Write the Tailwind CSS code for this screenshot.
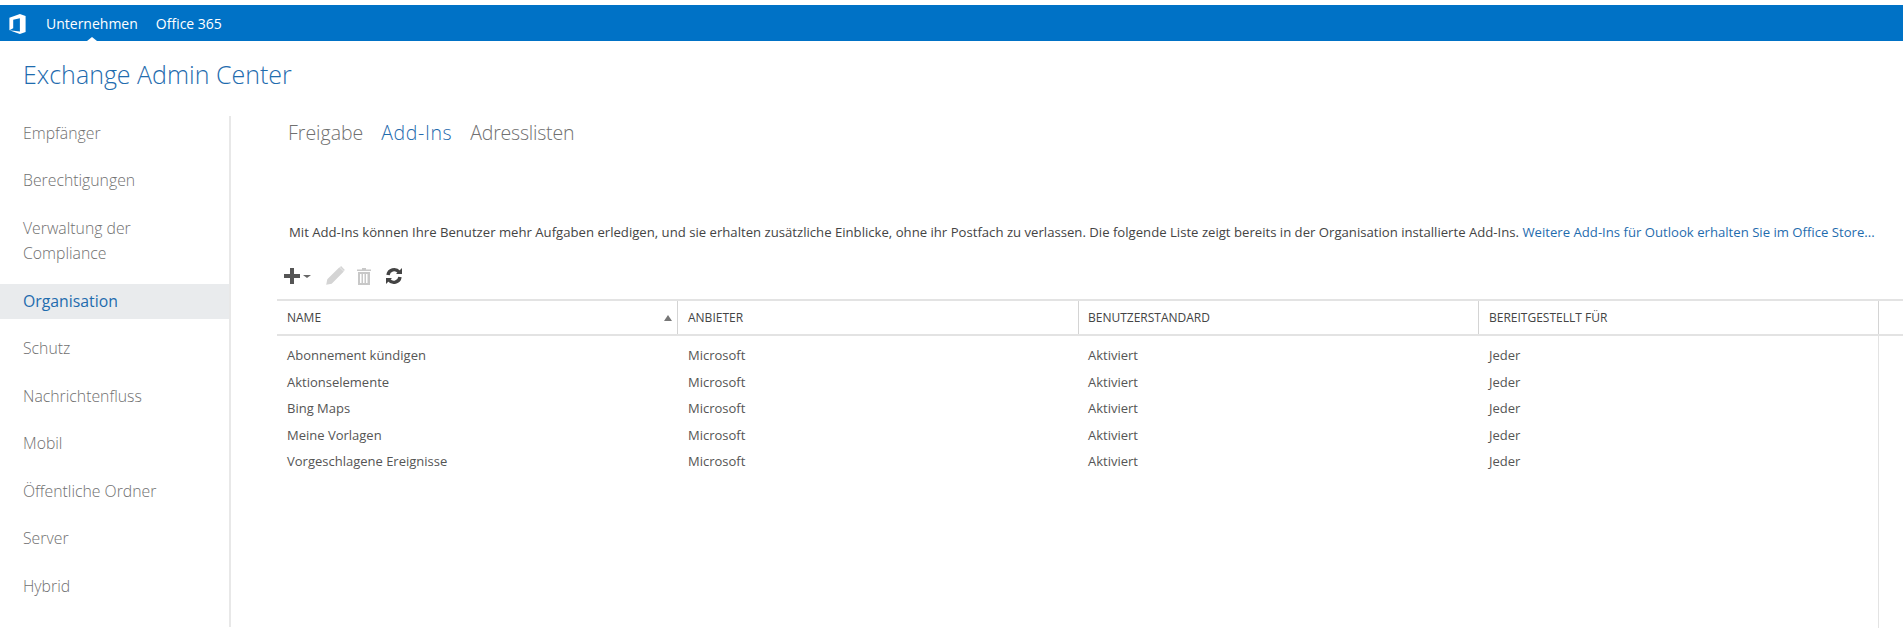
<!DOCTYPE html>
<html lang="de">
<head>
<meta charset="UTF-8">
<title>Exchange Admin Center</title>
<script src="https://cdn.jsdelivr.net/npm/@tailwindcss/browser@4"></script>
</head>
<body class="h-[628px] overflow-hidden bg-white font-['Open_Sans',sans-serif] text-[#333]">
  <div class="h-[5px]"></div>
  <header class="relative flex h-[36px] items-center bg-[#0072c6] text-[14px] text-white">
    <svg class="mt-[1px] ml-[8px] h-[20px] w-[19px]" viewBox="0 0 19 21" fill="#fff"><path d="M1 4 12 0l6 2v17l-6 2-11-4 11 1.500V4.500L5 6v9l-4 2z"/></svg>
    <span class="ml-[19px]">Unternehmen</span>
    <span class="ml-[18px]">Office 365</span>
    <span class="absolute top-[32px] left-[87px] h-0 w-0 border-x-[5px] border-b-[4px] border-x-transparent border-b-white"></span>
  </header>
  <h1 class="pt-[16px] pl-[23px] text-[25px] leading-[34px] font-light text-[#1f6cae]">Exchange Admin Center</h1>
  <div class="mt-[25px] flex h-[511px]">
    <nav class="flex w-[231px] flex-none flex-col gap-[12.450px] border-r-2 border-[#e8e8e8] text-[15.800px] font-light text-[#707070]">
      <a class="flex h-[35px] items-center pl-[23px]">Empfänger</a>
      <a class="flex h-[35px] items-center pl-[23px]">Berechtigungen</a>
      <a class="pt-[5px] pb-[5px] pl-[23px] leading-[25.500px]">Verwaltung der<br>Compliance</a>
      <a class="flex h-[35px] items-center bg-[#e9ebed] pl-[23px] font-normal text-[#1f6cae]">Organisation</a>
      <a class="flex h-[35px] items-center pl-[23px]">Schutz</a>
      <a class="flex h-[35px] items-center pl-[23px]">Nachrichtenfluss</a>
      <a class="flex h-[35px] items-center pl-[23px]">Mobil</a>
      <a class="flex h-[35px] items-center pl-[23px]">Öffentliche Ordner</a>
      <a class="flex h-[35px] items-center pl-[23px]">Server</a>
      <a class="flex h-[35px] items-center pl-[23px]">Hybrid</a>
    </nav>
    <main class="min-w-0 flex-1 pl-[46px]">
      <div class="flex pt-[3px] pl-[11px] text-[19.500px] leading-[28px] font-light text-[#707070]">
        <span>Freigabe</span>
        <span class="ml-[18px] tracking-[0.600px] text-[#1f6cae]">Add-Ins</span>
        <span class="ml-[18px] tracking-[-0.200px]">Adresslisten</span>
      </div>
      <p class="mt-[76px] pl-[12px] text-[13.150px] leading-[18px] whitespace-nowrap text-[#444]">Mit Add-Ins können Ihre Benutzer mehr Aufgaben erledigen, und sie erhalten zusätzliche Einblicke, ohne ihr Postfach zu verlassen. Die folgende Liste zeigt bereits in der Organisation installierte Add-Ins. <a class="text-[#1f6cae]">Weitere Add-Ins für Outlook erhalten Sie im Office Store...</a></p>
      <div class="mt-[23px] flex h-[24px] items-center pl-[6px]">
        <svg class="h-[18px] w-[18px]" viewBox="0 0 18 18" fill="#555"><path d="M7 1h4v6h6v4h-6v6H7v-6H1V7h6z"/></svg>
        <span class="ml-[2px] h-0 w-0 border-x-[4px] border-t-[3px] border-x-transparent border-t-[#666]"></span>
        <svg class="ml-[13px] h-[22px] w-[22px]" viewBox="0 0 20 20" fill="#d4d4d4"><path d="M14 2l4 4L7 17l-5 1 1-5zM15.500 1l3.500 3.500-1 1L14.500 2z"/></svg>
        <svg class="ml-[10px] h-[17px] w-[16px]" viewBox="0 0 16 17" fill="#c8c8c8"><path d="M6 0h4v1.500h5V3H1V1.500h5zM2 4h12v13H2zm2 2v9h1.500V6zm3 0v9h1.500V6zm3 0v9h1.500V6z" fill-rule="evenodd"/></svg>
        <svg class="ml-[13px] h-[18px] w-[18px]" viewBox="0 0 18 18" fill="none" stroke="#444" stroke-width="3.400"><path d="M3 8a6.200 6.200 0 0 1 11-3"/><path d="M15 10a6.200 6.200 0 0 1-11 3"/><path d="M17 1v6h-6z" fill="#444" stroke="none"/><path d="M1 17v-6h6z" fill="#444" stroke="none"/></svg>
      </div>
      <div class="mt-[11px] grid h-[37px] grid-cols-[401px_401px_400px_400px_1fr] border-y-2 border-[#e3e3e3] text-[12px] text-[#444]">
        <div class="relative flex items-center border-r border-[#d4d4d4] pl-[10px]">NAME<span class="absolute right-[5px] h-0 w-0 border-x-[4px] border-b-[6px] border-x-transparent border-b-[#777]"></span></div>
        <div class="flex items-center border-r border-[#d4d4d4] pl-[10px]">ANBIETER</div>
        <div class="flex items-center border-r border-[#d4d4d4] pl-[9px]">BENUTZERSTANDARD</div>
        <div class="flex items-center border-r border-[#d4d4d4] pl-[10px]">BEREITGESTELLT FÜR</div>
        <div></div>
      </div>
      <div class="grid h-[300px] w-[1602px] grid-cols-[401px_401px_400px_400px] content-start border-r border-[#e3e3e3] pt-[6px] text-[13px] leading-[26.600px] text-[#555]">
        <div class="pl-[10px]">Abonnement kündigen</div><div class="pl-[10px]">Microsoft</div><div class="pl-[9px]">Aktiviert</div><div class="pl-[10px]">Jeder</div>
        <div class="pl-[10px]">Aktionselemente</div><div class="pl-[10px]">Microsoft</div><div class="pl-[9px]">Aktiviert</div><div class="pl-[10px]">Jeder</div>
        <div class="pl-[10px]">Bing Maps</div><div class="pl-[10px]">Microsoft</div><div class="pl-[9px]">Aktiviert</div><div class="pl-[10px]">Jeder</div>
        <div class="pl-[10px]">Meine Vorlagen</div><div class="pl-[10px]">Microsoft</div><div class="pl-[9px]">Aktiviert</div><div class="pl-[10px]">Jeder</div>
        <div class="pl-[10px]">Vorgeschlagene Ereignisse</div><div class="pl-[10px]">Microsoft</div><div class="pl-[9px]">Aktiviert</div><div class="pl-[10px]">Jeder</div>
      </div>
    </main>
  </div>
</body>
</html>
